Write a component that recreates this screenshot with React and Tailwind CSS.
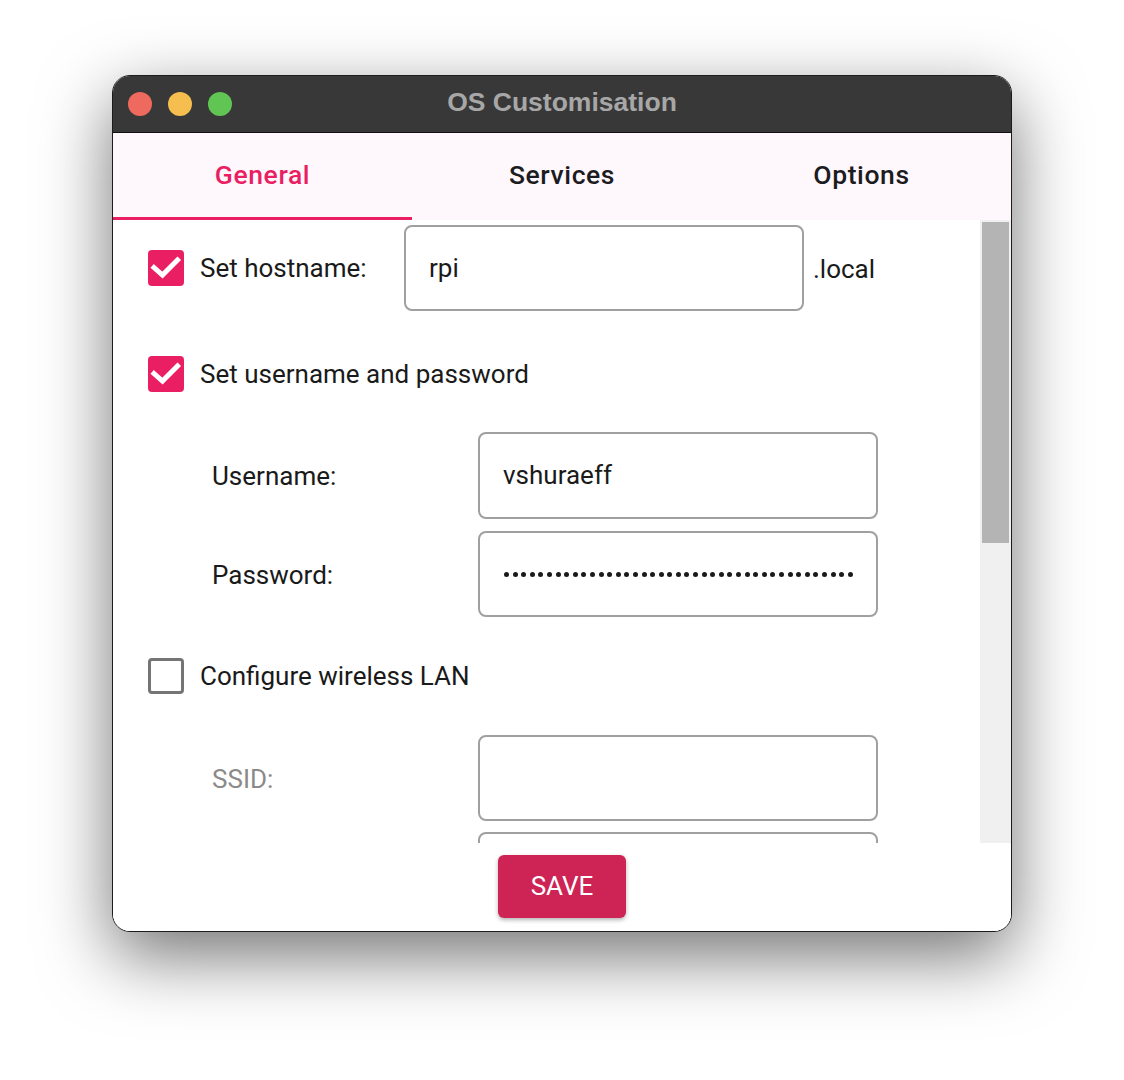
import React from "react";

function CheckBox({ checked }) {
  if (checked) {
    return (
      <div className="w-[36px] h-[36px] rounded-[4px] bg-[#e91e63] flex items-center justify-center shrink-0">
        <svg width="36" height="36" viewBox="0 0 36 36">
          <polyline points="6,17.5 14.5,25 29.5,10" fill="none" stroke="#ffffff" strokeWidth="5" strokeLinecap="square" />
        </svg>
      </div>
    );
  }
  return <div className="w-[36px] h-[36px] rounded-[4px] border-[3px] border-[#757575] bg-white shrink-0" />;
}

function Field({ children, className = "" }) {
  return (
    <div className={"w-[400px] h-[86px] rounded-[8px] border-2 border-[#a0a0a0] bg-white flex items-center pl-[23px] text-[26px] text-[#1a1a1a] " + className}>
      {children}
    </div>
  );
}

export default function App() {
  const dots = Array.from({ length: 41 });
  return (
    <div className="w-[1124px] h-[1080px] bg-white pt-[75px] pl-[112px]" style={{ fontFamily: "Roboto, 'Noto Sans', sans-serif" }}>
      <div className="w-[900px] h-[857px] rounded-[18px] border border-[#1c1c1c] overflow-hidden flex flex-col bg-white shadow-[0_24px_70px_rgba(0,0,0,0.55)]">
        {/* Title bar */}
        <div className="h-[57px] shrink-0 bg-[#383838] border-b border-[#111] relative flex items-center pl-[15px] gap-[16px]">
          <div className="w-[24px] h-[24px] rounded-full bg-[#ee6a5e]" />
          <div className="w-[24px] h-[24px] rounded-full bg-[#f5be4f]" />
          <div className="w-[24px] h-[24px] rounded-full bg-[#61c554]" />
          <div className="absolute inset-0 flex items-center justify-center text-[26.5px] font-bold text-[#a7a7a7] pb-[2px]" style={{ fontFamily: "'Liberation Sans', Arial, sans-serif" }}>
            OS Customisation
          </div>
        </div>
        {/* Tabs */}
        <div className="h-[87px] shrink-0 bg-[#fef8fd] flex">
          <div className="w-[299px] flex flex-col">
            <div className="flex-1 flex items-center justify-center text-[26.5px] tracking-[0.6px] font-medium text-[#e91e63]">General</div>
            <div className="h-[3px] bg-[#e91e63]" />
          </div>
          <div className="w-[300px] flex items-center justify-center text-[26.5px] tracking-[0.6px] font-medium text-[#1c1b1f] pb-[3px]">Services</div>
          <div className="flex-1 flex items-center justify-center text-[26.5px] tracking-[0.6px] font-medium text-[#1c1b1f] pb-[3px]">Options</div>
        </div>
        {/* Content */}
        <div className="h-[623px] shrink-0 flex">
          <div className="flex-1 overflow-hidden pl-[35px] text-[26px] text-[#1a1a1a]">
            <div className="mt-[5px] h-[86px] flex items-center">
              <div className="w-[256px] flex items-center gap-[16px]">
                <CheckBox checked />
                <span>Set hostname:</span>
              </div>
              <Field>rpi</Field>
              <span className="ml-[9px] pt-[2px]">.local</span>
            </div>
            <div className="mt-[45px] h-[36px] flex items-center gap-[16px]">
              <CheckBox checked />
              <span>Set username and password</span>
            </div>
            <div className="mt-[40px] flex items-center">
              <div className="w-[330px] pl-[64px] pt-[2px]">Username:</div>
              <Field className="h-[87px]">vshuraeff</Field>
            </div>
            <div className="mt-[12px] flex items-center">
              <div className="w-[330px] pl-[64px] pt-[2px]">Password:</div>
              <Field className="pl-[24px]">
                <div className="flex items-center gap-[3.6px]">
                  {dots.map((_, i) => (
                    <div key={i} className="w-[5px] h-[5px] rounded-full bg-[#1a1a1a]" />
                  ))}
                </div>
              </Field>
            </div>
            <div className="mt-[41px] h-[36px] flex items-center gap-[16px]">
              <CheckBox checked={false} />
              <span>Configure wireless LAN</span>
            </div>
            <div className="mt-[41px] flex items-center">
              <div className="w-[330px] pl-[64px] pt-[2px] text-[#8a8a8a]">SSID:</div>
              <Field />
            </div>
            <div className="mt-[11px] flex items-center">
              <div className="w-[330px]" />
              <Field />
            </div>
          </div>
          <div className="w-[31px] shrink-0 bg-[#f0f0f0] pt-[2px] px-[2px]">
            <div className="h-[321px] bg-[#b4b4b4]" />
          </div>
        </div>
        {/* Footer */}
        <div className="flex-1 flex justify-center pt-[12px] bg-white">
          <div className="w-[128px] h-[63px] rounded-[6px] bg-[#cd2355] text-white text-[26px] flex items-center justify-center shadow-[0_2px_4px_rgba(0,0,0,0.3)]">
            SAVE
          </div>
        </div>
      </div>
    </div>
  );
}
